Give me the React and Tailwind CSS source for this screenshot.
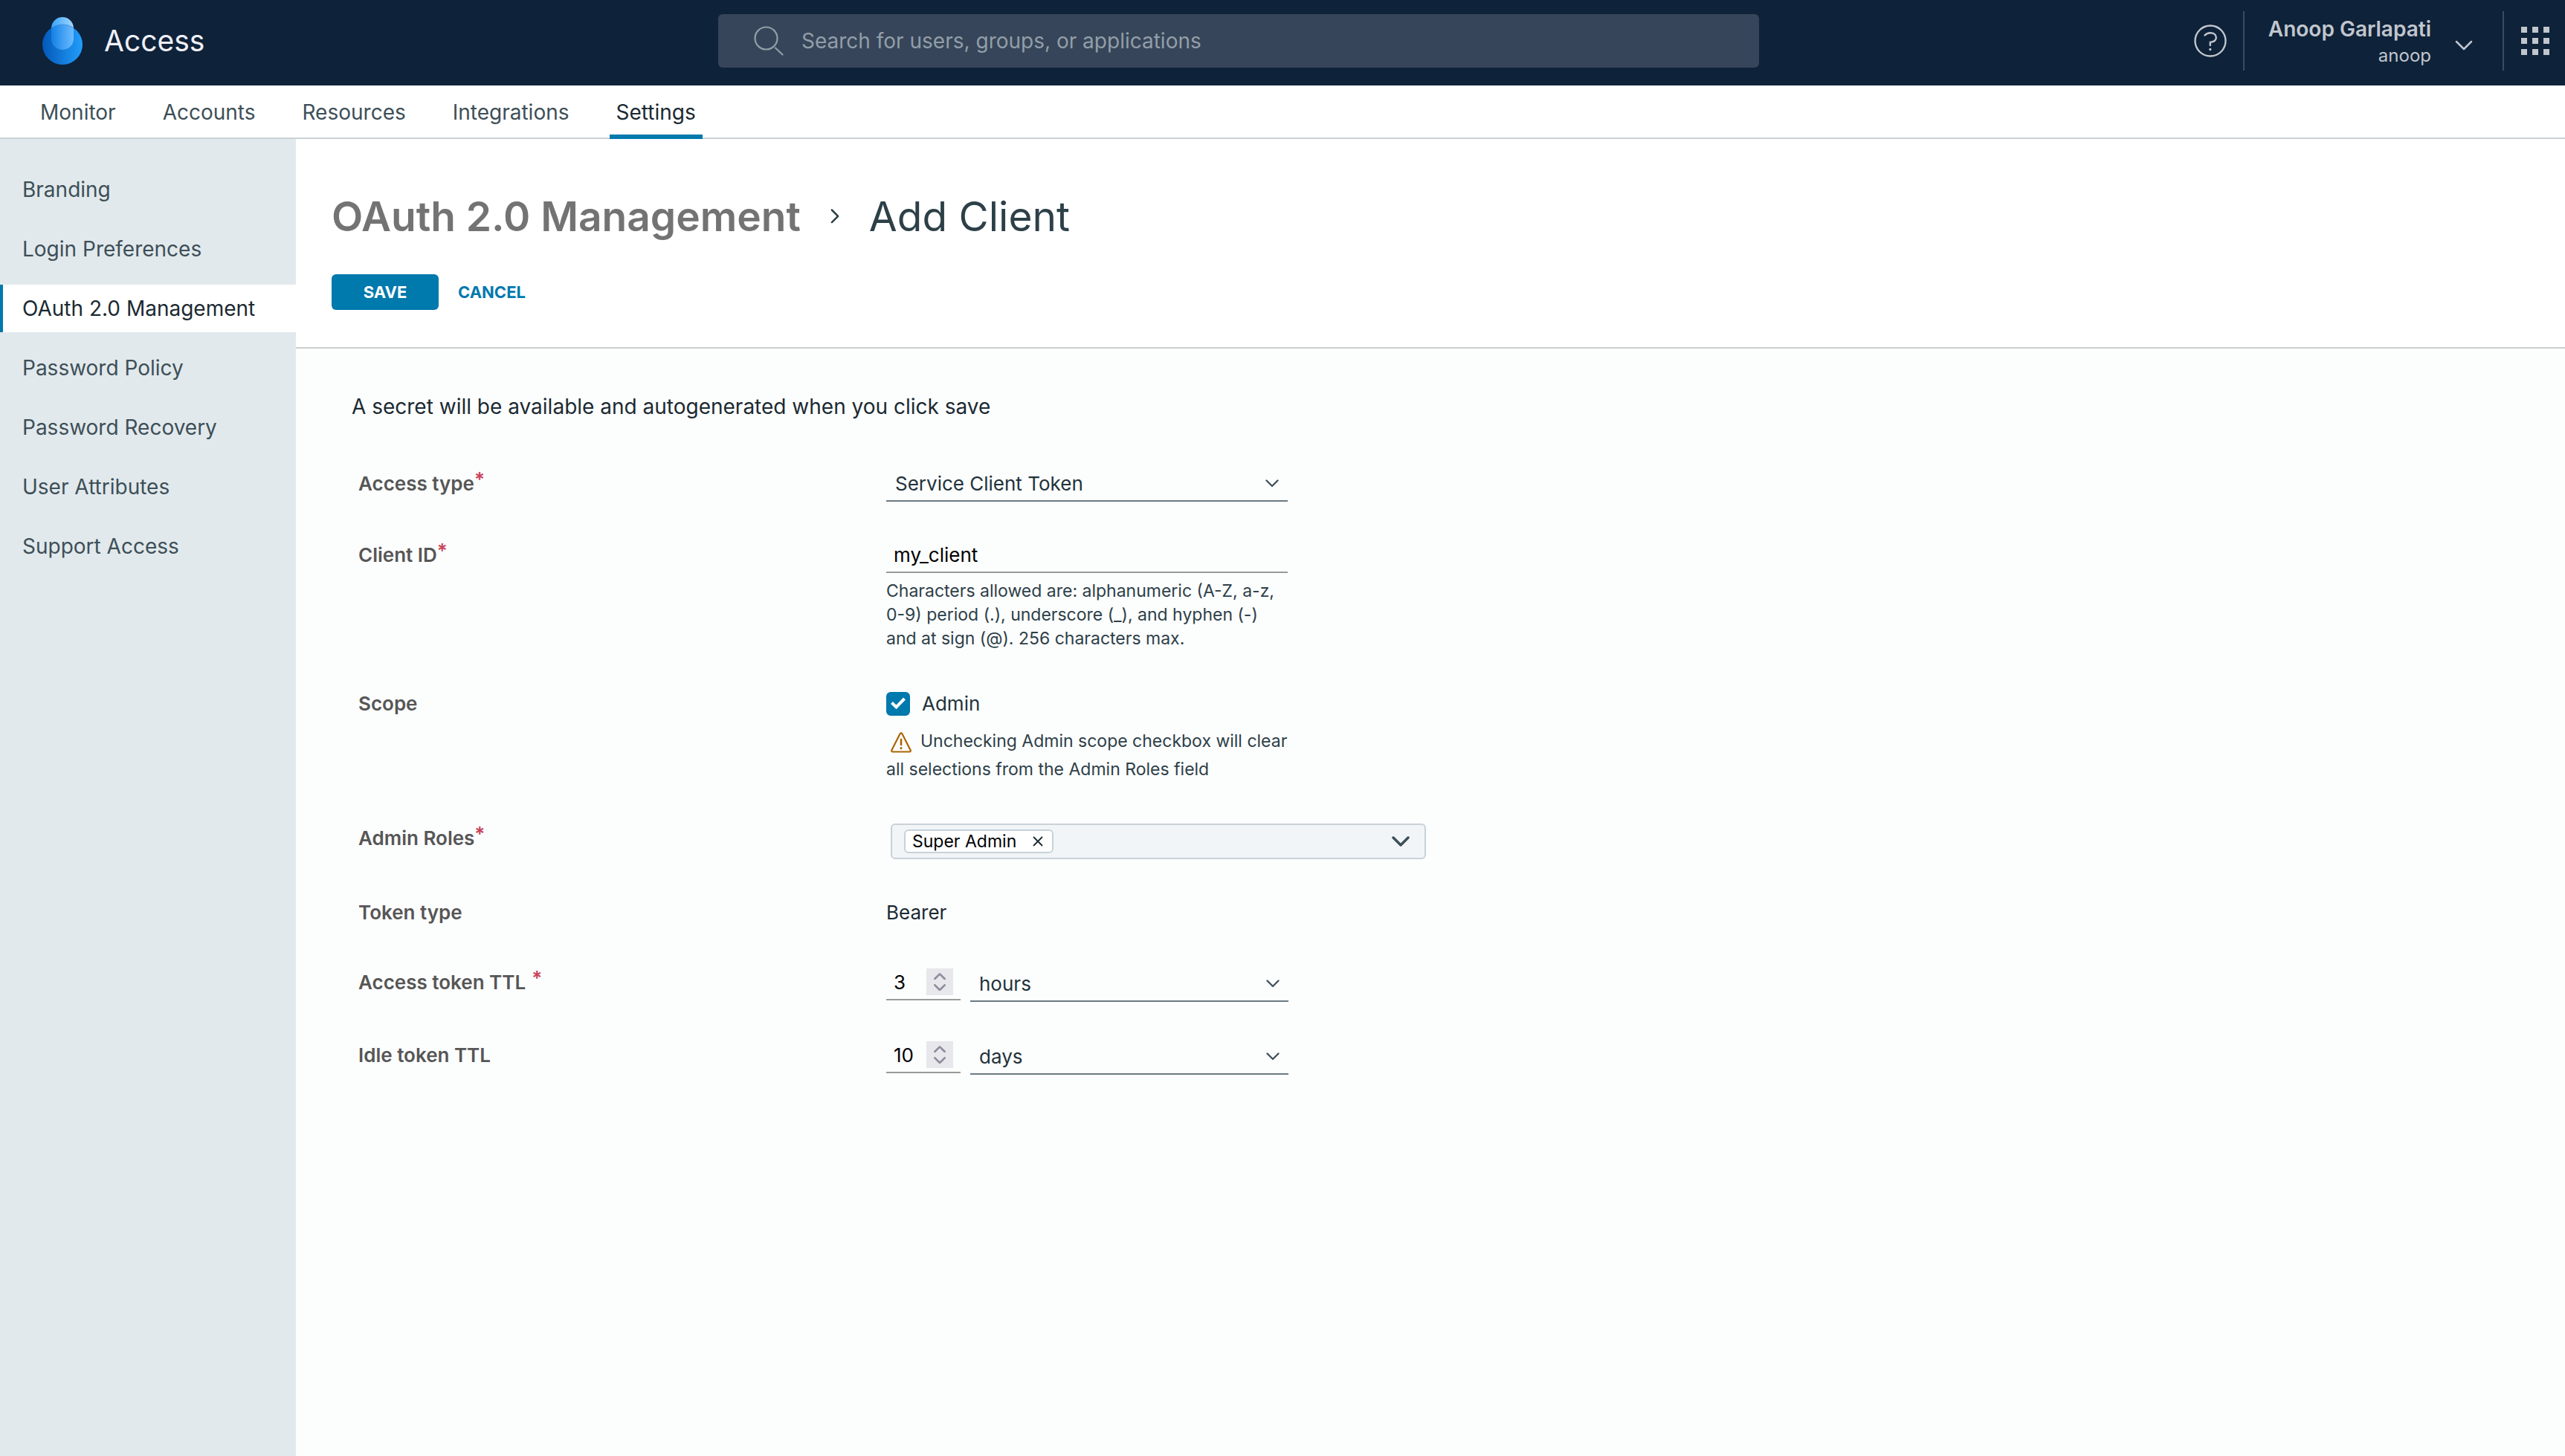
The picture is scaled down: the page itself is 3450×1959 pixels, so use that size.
import { useState } from "react";

const tabs = ["Monitor", "Accounts", "Resources", "Integrations", "Settings"];

const sections = [
  "Branding",
  "Login Preferences",
  "OAuth 2.0 Management",
  "Password Policy",
  "Password Recovery",
  "User Attributes",
  "Support Access",
];

function Chevron({ className, strokeWidth = 2 }) {
  return (
    <svg viewBox="0 0 24 14" fill="none" stroke="currentColor" strokeWidth={strokeWidth} strokeLinecap="round" strokeLinejoin="round" className={className} aria-hidden="true">
      <path d="M2 2l10 10L22 2" />
    </svg>
  );
}

function Logo() {
  return (
    <svg viewBox="0 0 54 64" className="h-16 w-[54px]" aria-hidden="true">
      <defs>
        <linearGradient id="drop-base" x1="0" x2="1">
          <stop offset="0" stopColor="#0458b9" />
          <stop offset="1" stopColor="#229efb" />
        </linearGradient>
        <linearGradient id="drop-cap" x1="0" x2="1">
          <stop offset="0" stopColor="#36a5fd" />
          <stop offset="1" stopColor="#a3d5ff" />
        </linearGradient>
        <linearGradient id="drop-overlap" x1="0" x2="1">
          <stop offset="0" stopColor="#1480e6" />
          <stop offset="1" stopColor="#6cbcff" />
        </linearGradient>
        <clipPath id="drop-clip">
          <circle cx="27" cy="37" r="27" />
        </clipPath>
      </defs>
      <rect x="12" y="0" width="30" height="44" rx="15" fill="url(#drop-cap)" />
      <circle cx="27" cy="37" r="27" fill="url(#drop-base)" />
      <rect x="12" y="0" width="30" height="44" rx="15" fill="url(#drop-overlap)" clipPath="url(#drop-clip)" />
      <path d="M12 14.500A27 27 0 0 1 42 14.500" fill="none" stroke="#3f8fd6" strokeWidth="0.700" />
    </svg>
  );
}

function Header() {
  return (
    <header className="flex h-[115px] items-center bg-[#0e2239] pb-[5px]">
      <div className="flex w-[28%] items-center gap-[29px] pl-[57px]">
        <Logo />
        <span className="text-[39px] leading-12 text-[#f0f0f8]">Access</span>
      </div>
      <div className="flex h-[72px] w-[1400px] items-center gap-6 rounded-md bg-[#364559] pl-12">
        <svg viewBox="0 0 40 40" fill="none" stroke="#929ea8" strokeWidth="2.200" strokeLinecap="round" className="size-10" aria-hidden="true">
          <circle cx="16.500" cy="16.500" r="15" />
          <path d="M29 29.500l9.500 9" />
        </svg>
        <input type="search" aria-label="Search for users, groups, or applications" placeholder="Search for users, groups, or applications" className="min-w-0 flex-1 bg-transparent text-[28px] leading-10 text-white outline-none placeholder:text-[#929ea8]" />
      </div>
      <div className="ml-auto flex h-20 items-center text-[#c1c6cd]">
        <button type="button" aria-label="Help" className="mr-[22px]">
          <svg viewBox="0 0 44 44" fill="none" stroke="currentColor" strokeWidth="2.400" strokeLinecap="round" className="size-11" aria-hidden="true">
            <circle cx="22" cy="22" r="20.500" />
            <path d="M14.500 14.500c2-2.200 4.400-3.300 7.300-3.300 4.800 0 8 2.700 8 6.400 0 4-3.400 5.800-8 6.300v4" />
            <circle cx="21.800" cy="33.500" r="1" fill="currentColor" strokeWidth="1.400" />
          </svg>
        </button>
        <div className="h-20 w-0.5 bg-[#3a4b60]" />
        <button type="button" className="flex items-center pt-1 pr-10 pl-8 text-right">
          <span className="flex flex-col">
            <span className="text-[28px] leading-9 font-semibold">Anoop Garlapati</span>
            <span className="text-2xl leading-9">anoop</span>
          </span>
          <Chevron className="mt-2 ml-8 w-6" strokeWidth={2.5} />
        </button>
        <div className="h-20 w-0.5 bg-[#3a4b60]" />
        <button type="button" aria-label="Applications" className="mr-[21px] ml-[23px] grid grid-cols-3 gap-[7px]">
          {Array.from({ length: 9 }, (_, i) => (
            <span key={i} className="size-2 bg-current" />
          ))}
        </button>
      </div>
    </header>
  );
}

function Tabs() {
  return (
    <nav className="flex h-[72px] gap-[45px] border-b-2 border-[#c9d2d8] bg-white pl-[45px] text-[28px]">
      {tabs.map((tab) => (
        <a
          key={tab}
          href="#"
          className={
            tab === "Settings"
              ? "-mb-0.5 border-b-6 border-[#0079ad] px-[9px] pt-4 leading-10 text-[#1b2a32]"
              : "px-[9px] pt-4 leading-10 text-[#3d4f58]"
          }
        >
          {tab}
        </a>
      ))}
    </nav>
  );
}

function Sidebar() {
  return (
    <aside className="flex w-[398px] shrink-0 flex-col gap-4 bg-[#e2e9ec] pt-9 text-[28px]">
      {sections.map((name) => (
        <a
          key={name}
          href="#"
          className={
            name === "OAuth 2.0 Management"
              ? "border-l-4 border-[#0079ad] bg-white pl-[26px] leading-16 whitespace-nowrap text-[#1b2a32]"
              : "border-l-4 border-transparent pl-[26px] leading-16 whitespace-nowrap text-[#3d4f58]"
          }
        >
          {name}
        </a>
      ))}
    </aside>
  );
}

function Row({ label, htmlFor, required, spaced, labelClass, className, children }) {
  const Tag = htmlFor ? "label" : "span";
  return (
    <div className={`grid grid-cols-[710px_1fr] items-start ${className}`}>
      <Tag htmlFor={htmlFor} className={`flex items-start text-[26px] leading-8 font-semibold text-[#565656] ${labelClass}`}>
        {label}
        {required && <span className={spaced ? "ml-2 leading-5 text-[#c9435a]" : "leading-5 text-[#c9435a]"}>*</span>}
      </Tag>
      <div>{children}</div>
    </div>
  );
}

function Select({ id, label, options, value, className }) {
  return (
    <div className={`relative ${className}`}>
      <select id={id} aria-label={label} defaultValue={value} className="block h-12 w-full appearance-none border-b-2 border-[#6a7a81] bg-transparent pl-3 text-[26px] text-[#22333b] outline-none">
        {options.map((option) => (
          <option key={option}>{option}</option>
        ))}
      </select>
      <Chevron className="pointer-events-none absolute top-[18px] right-3 w-[18px] text-[#3d4f58]" strokeWidth={3} />
    </div>
  );
}

function Duration({ id, amount, unit, unitLabel }) {
  const [value, setValue] = useState(amount);
  return (
    <div className="flex w-[541px] gap-[13px]">
      <div className="-mt-0.5 flex h-12 w-[100px] items-center justify-between border-b-2 border-[#9a9a9a] px-[10px]">
        <input
          id={id}
          type="number"
          value={value}
          onChange={(e) => setValue(Number(e.target.value))}
          className="w-10 appearance-none bg-transparent text-[26px] text-black outline-none [-moz-appearance:textfield] [&::-webkit-inner-spin-button]:appearance-none"
        />
        <span className="flex h-9 w-9 flex-col items-center justify-between bg-[#e8e7ec] py-[6px] text-[#8f8d9c]">
          <button type="button" aria-label="Increase" onClick={() => setValue(value + 1)}>
            <Chevron className="w-4 rotate-180" strokeWidth={4} />
          </button>
          <button type="button" aria-label="Decrease" onClick={() => setValue(value - 1)}>
            <Chevron className="w-4" strokeWidth={4} />
          </button>
        </span>
      </div>
      <Select label={unitLabel} options={["minutes", "hours", "days"]} value={unit} className="flex-1" />
    </div>
  );
}

function ClientForm() {
  return (
    <form className="pt-[62px] pl-[75px]">
      <p className="text-[28px] leading-8 text-[#1b2a32]">A secret will be available and autogenerated when you click save</p>
      <div className="pl-[9px]">
        <Row label="Access type" htmlFor="access-type" required className="mt-16" labelClass="mt-2">
          <Select id="access-type" options={["Service Client Token", "User Access Token"]} value="Service Client Token" className="w-[540px]" />
        </Row>
        <Row label="Client ID" htmlFor="client-id" required className="mt-12" labelClass="mt-2">
          <input id="client-id" type="text" defaultValue="my_client" className="block h-12 w-[540px] border-b-2 border-[#9a9a9a] bg-transparent pl-[10px] text-[26px] text-black outline-none" />
          <p className="mt-2 w-[540px] text-[23px] leading-8 text-[#2d4048]">
            Characters allowed are: alphanumeric (A-Z, a-z, 0-9) period (.), underscore (_), and hyphen (-) and at sign (@). 256 characters max.
          </p>
        </Row>
        <Row label="Scope" className="mt-14">
          <label className="flex items-center gap-4 text-[26px] leading-8 text-[#22333b]">
            <span className="grid size-8">
              <input type="checkbox" defaultChecked className="peer col-start-1 row-start-1 size-8 appearance-none rounded-md border-2 border-[#0079ad] checked:bg-[#0079ad]" />
              <svg viewBox="0 0 32 32" fill="none" stroke="white" strokeWidth="4" className="pointer-events-none invisible col-start-1 row-start-1 size-8 peer-checked:visible" aria-hidden="true">
                <path d="M7.500 14.500l6 6 11-11.500" />
              </svg>
            </span>
            Admin
          </label>
          <p className="mt-[15px] w-[540px] text-[23px] leading-[38px] text-[#2d4048]">
            <svg viewBox="0 0 28 28" fill="none" stroke="#ad6500" strokeWidth="2.200" strokeLinejoin="round" strokeLinecap="round" className="mr-3 ml-[6px] inline-block size-7 align-middle" aria-hidden="true">
              <path d="M12.600 2.200a1.600 1.600 0 0 1 2.800 0l11.200 22a1.500 1.500 0 0 1-1.300 2.300H2.700a1.500 1.500 0 0 1-1.300-2.300z" />
              <path d="M14 10v7" strokeWidth="2.600" />
              <path d="M14 21.500v.2" strokeWidth="3" />
            </svg>
            Unchecking Admin scope checkbox will clear all selections from the Admin Roles field
          </p>
        </Row>
        <Row label="Admin Roles" required className="mt-[54px]" labelClass="mt-1">
          <div className="ml-[6px] flex h-12 w-[720px] items-center justify-between rounded-md border-2 border-[#c8d2d8] bg-[#f1f5f8] pr-5 pl-4">
            <span className="flex h-8 items-center gap-[22px] rounded-md border-2 border-[#c8d2d8] bg-white pr-3 pl-[9px] text-[23px] leading-7 text-black">
              Super Admin
              <button type="button" aria-label="Remove Super Admin">
                <svg viewBox="0 0 14 14" stroke="#1b2a32" strokeWidth="1.800" strokeLinecap="round" className="size-3.5" aria-hidden="true">
                  <path d="M1.500 1.500l11 11M12.500 1.500l-11 11" />
                </svg>
              </button>
            </span>
            <button type="button" aria-label="Show admin roles" className="text-[#3d4f58]">
              <Chevron className="w-6" strokeWidth={3.5} />
            </button>
          </div>
        </Row>
        <Row label="Token type" className="mt-14">
          <span className="block text-[26px] leading-8 text-[#1b2a32]">Bearer</span>
        </Row>
        <Row label="Access token TTL" htmlFor="access-ttl" required spaced className="mt-14" labelClass="mt-[6px]">
          <Duration id="access-ttl" amount={3} unit="hours" unitLabel="Access token TTL unit" />
        </Row>
        <Row label="Idle token TTL" htmlFor="idle-ttl" className="mt-[50px]" labelClass="mt-[6px]">
          <Duration id="idle-ttl" amount={10} unit="days" unitLabel="Idle token TTL unit" />
        </Row>
      </div>
    </form>
  );
}

export default function App() {
  return (
    <div className="flex min-h-screen flex-col bg-white font-['Inter',sans-serif]">
      <Header />
      <Tabs />
      <div className="flex flex-1">
        <Sidebar />
        <main className="flex-1 bg-[#fcfdfd]">
          <div className="border-b-2 border-[#cccccc] bg-white pt-[68px] pb-[50px] pl-12">
            <h1 className="flex items-center text-[55px] leading-[72px]">
              <a href="#" className="font-semibold text-[#737373]">OAuth 2.0 Management</a>
              <Chevron className="mx-9 w-5 -rotate-90 text-[#2d4048]" strokeWidth={3} />
              <span className="text-[#2d4048]">Add Client</span>
            </h1>
            <div className="mt-[42px] flex gap-[26px] text-[22px] font-bold">
              <button type="submit" className="h-12 w-36 rounded-md bg-[#0079ad] text-white">SAVE</button>
              <button type="button" className="text-[#0079ad]">CANCEL</button>
            </div>
          </div>
          <ClientForm />
        </main>
      </div>
    </div>
  );
}
